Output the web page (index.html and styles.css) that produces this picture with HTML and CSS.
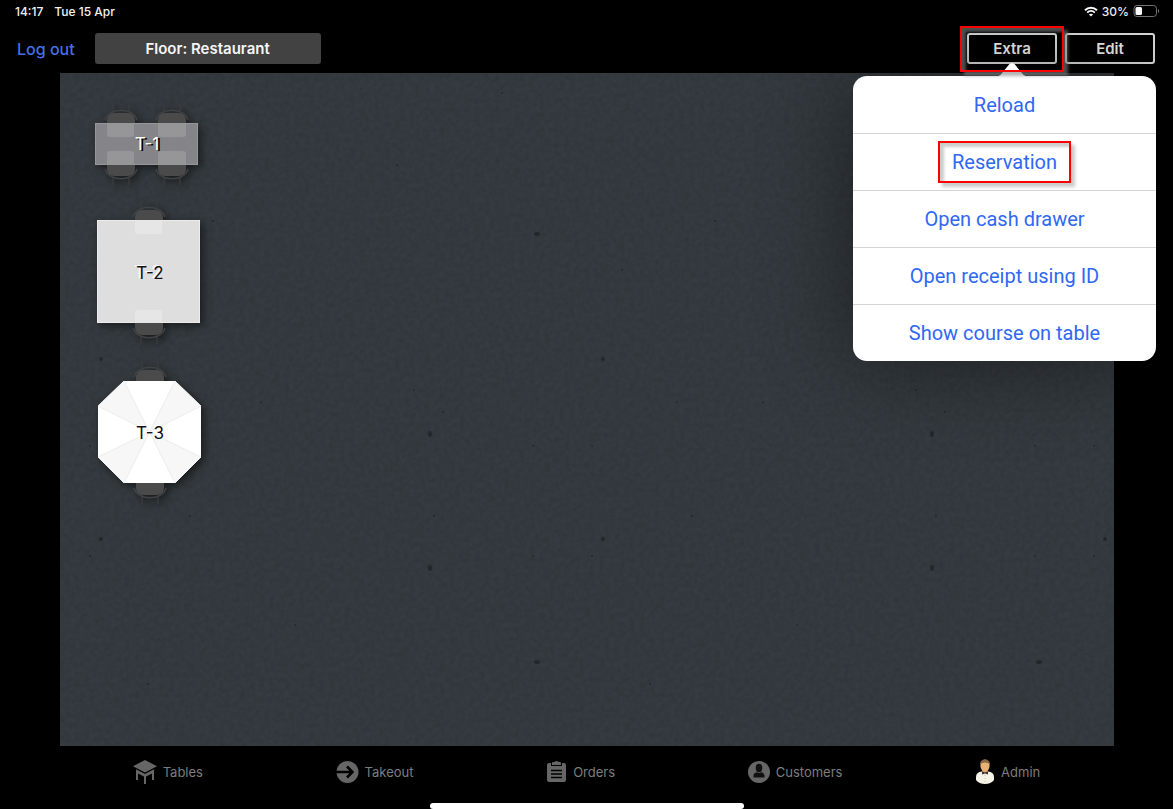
FILE: index.html
```html
<!DOCTYPE html>
<html lang="en">
<head>
    <meta charset="UTF-8">
    <meta name="viewport" content="width=device-width, initial-scale=1.0">
    <title>Floor: Restaurant</title>
    <link rel="stylesheet" href="styles.css">
</head>
<body>
    <div class="status-bar">
        <span>14:17</span>
        <span>Tue 15 Apr</span>
        <div class="status-right">
            <svg width="14" height="11" viewBox="0 0 14 11" fill="none" stroke="#fff" stroke-width="2">
                <path d="M1 4.2C4.4 .8 9.6 .8 13 4.2M3.2 6.6c2.2-2.1 5.4-2.1 7.6 0"/>
                <path d="M7 10.6L4.9 8.5c1.2-1.1 3-1.1 4.2 0z" fill="#fff" stroke="none"/>
            </svg>
            <span>30%</span>
            <svg width="27" height="12" viewBox="0 0 27 12">
                <rect x="1" y=".5" width="22.5" height="11" rx="3" fill="none" stroke="#777"/>
                <rect x="2.500" y="2" width="6.500" height="8" rx="1.500" fill="#fff"/>
                <path d="M25 4v4c1.600-.6 1.600-3.400 0-4z" fill="#777"/>
            </svg>
        </div>
    </div>

    <header class="toolbar">
        <a class="logout" href="#">Log out</a>
        <button class="floor-button">Floor: Restaurant</button>
        <div class="toolbar-right">
            <div class="extra">
                <button class="outline-button">Extra</button>
                <div class="popover">
                    <button>Reload</button>
                    <button><span class="marked">Reservation</span></button>
                    <button>Open cash drawer</button>
                    <button>Open receipt using ID</button>
                    <button>Show course on table</button>
                </div>
            </div>
            <button class="outline-button">Edit</button>
        </div>
    </header>

    <main class="floor">
        <svg class="concrete" width="100%" height="100%">
            <defs>
                <filter id="grain" x="0" y="0" width="100%" height="100%">
                    <feTurbulence type="fractalNoise" baseFrequency=".2" numOctaves="3" seed="4"/>
                    <feColorMatrix values="0 0 0 0 0  0 0 0 0 0  0 0 0 0 0  .16 0 0 0 -.04"/>
                </filter>
                <pattern id="specks" width="502" height="674" patternUnits="userSpaceOnUse">
                    <g fill="#22272b">
                        <ellipse cx="370" cy="361" rx="2" ry="3"/>
                        <ellipse cx="370" cy="495" rx="2" ry="3"/>
                        <ellipse cx="477" cy="161" rx="3" ry="2"/>
                        <ellipse cx="477" cy="589" rx="3" ry="2"/>
                        <ellipse cx="41" cy="286" rx="2" ry="2"/>
                        <ellipse cx="41" cy="466" rx="2" ry="2"/>
                        <circle cx="383" cy="339" r="1"/>
                        <circle cx="354" cy="317" r="1"/>
                        <circle cx="115" cy="329" r="1"/>
                        <circle cx="473" cy="373" r="1"/>
                        <circle cx="30" cy="373" r="1"/>
                        <circle cx="473" cy="483" r="1"/>
                        <circle cx="30" cy="483" r="1"/>
                        <circle cx="374" cy="443" r="1"/>
                        <circle cx="130" cy="443" r="1"/>
                        <circle cx="201" cy="329" r="1"/>
                        <circle cx="153" cy="148" r="1"/>
                        <circle cx="60" cy="197" r="1"/>
                        <circle cx="337" cy="92" r="1"/>
                        <circle cx="442" cy="20" r="1"/>
                        <circle cx="235" cy="552" r="1"/>
                        <circle cx="88" cy="611" r="1"/>
                    </g>
                </pattern>
            </defs>
            <rect width="100%" height="100%" filter="url(#grain)"/>
            <rect width="100%" height="100%" fill="url(#specks)"/>
        </svg>

        <svg width="0" height="0" class="symbols">
            <symbol id="chair" viewBox="0 0 34 36" overflow="visible">
                <path d="M9 0v8M25 0v8" stroke="#383b3d" stroke-width="1.500"/>
                <path d="M1 16C5 3 29 3 33 16" fill="none" stroke="#414243" stroke-width="1.500"/>
                <rect x="3" y="9" width="28" height="25" rx="7" fill="#4a4a4a"/>
            </symbol>
        </svg>

        <button class="table table-1">
            <svg width="140" height="110" viewBox="0 0 140 110">
                <use href="#chair" x="24" y="14" width="34" height="36"/>
                <use href="#chair" x="75" y="14" width="34" height="36"/>
                <use href="#chair" width="34" height="36" transform="translate(58 95) rotate(180)"/>
                <use href="#chair" width="34" height="36" transform="translate(109 95) rotate(180)"/>
                <rect x="15" y="33" width="103" height="42" fill="#858589"/>
                <rect x="15.500" y="33.500" width="102" height="41" fill="none" stroke="#97979a"/>
                <path d="M27 33h27v11q0 3-3 3H30q-3 0-3-3zM78 33h28v11q0 3-3 3H81q-3 0-3-3zM27 75h27V64q0-3-3-3H30q-3 0-3 3zM78 75h28V64q0-3-3-3H81q-3 0-3 3z" fill="#969698"/>
            </svg>
            <span>T-1</span>
        </button>
        <button class="table table-2">
            <svg width="140" height="160" viewBox="0 0 140 160">
                <use href="#chair" x="52" y="6" width="34" height="36"/>
                <use href="#chair" width="34" height="36" transform="translate(86 149) rotate(180)"/>
                <rect x="17" y="25" width="103" height="103" fill="#dedede"/>
                <rect x="17.500" y="25.500" width="102" height="102" fill="none" stroke="#ececec"/>
                <path d="M55 25h27v11q0 3-3 3H58q-3 0-3-3zM55 128h27v-10q0-3-3-3H58q-3 0-3 3z" fill="#e6e6e6"/>
            </svg>
            <span>T-2</span>
        </button>
        <button class="table table-3">
            <svg width="140" height="160" viewBox="0 0 140 160">
                <use href="#chair" x="53" y="6" width="34" height="36"/>
                <use href="#chair" width="34" height="36" transform="translate(87 149) rotate(180)"/>
                <path d="M44 26h51l26 25v51l-26 26H44l-26-26V51z" fill="#fff"/>
                <path d="M69.500 77L95 26l26 25zM69.500 77L121 102l-26 26zM69.500 77L44 128l-26-26zM69.500 77L18 51l26-25z" fill="#f7f7f7" stroke="#ededed"/>
            </svg>
            <span>T-3</span>
        </button>
    </main>

    <nav class="tab-bar">
        <a href="#">
            <svg width="24" height="24" viewBox="0 0 24 24" fill="#666">
                <path d="M12 0l12 6.200L12 12.500 0 6.200z"/>
                <path d="M3 9.200l9 4.800 9-4.800V20h-2v-6.500l-6 3V24h-2v-7.500l-6-3V20H3z"/>
            </svg>
            <span>Tables</span>
        </a>
        <a href="#">
            <svg width="23" height="24" viewBox="0 0 23 24">
                <circle cx="11.500" cy="12" r="11" fill="#666"/>
                <path d="M0 12h16M11 6.500l5.500 5.500-5.500 5.500" fill="none" stroke="#000" stroke-width="2.500"/>
            </svg>
            <span>Takeout</span>
        </a>
        <a href="#">
            <svg width="21" height="24" viewBox="0 0 21 24">
                <path d="M3 3h2v3h11V3h2q2 0 2 2v15q0 2-2 2H3q-2 0-2-2V5q0-2 2-2z" fill="#666"/>
                <path d="M6 5V3q0-1 1-1h1.500q2-2 4 0H14q1 0 1 1v2z" fill="#666"/>
                <path d="M5 10.500h11M5 14h11M5 17.500h11" stroke="#000" stroke-width="1.500"/>
            </svg>
            <span>Orders</span>
        </a>
        <a href="#">
            <svg width="22" height="24" viewBox="0 0 22 24">
                <circle cx="11" cy="12" r="11" fill="#666"/>
                <ellipse cx="11" cy="8" rx="3.300" ry="4.200" fill="#111"/>
                <path d="M5.500 17.500v-2q0-2.500 3.500-3.200 2 1.400 4 0 3.500.7 3.500 3.200v2z" fill="#111"/>
            </svg>
            <span>Customers</span>
        </a>
        <a href="#">
            <svg width="20" height="26" viewBox="0 0 20 26">
                <path d="M1 18q0-5 6-5.500h6q6 .5 6 5.500v3q-3 4-9 4t-9-4z" fill="#f6f1e6"/>
                <path d="M7 10h6v3l-3 1-3-1z" fill="#d99a50"/>
                <ellipse cx="10" cy="6.500" rx="4.600" ry="6" fill="#e8b272"/>
                <path d="M5 6q0-5.500 5-5.500T15 6q-1-2.500-5-2.500T5 6z" fill="#8a6a45"/>
                <path d="M7 12.500l3 1 3-1v3l-3-1-3 1z" fill="#333"/>
                <path d="M10 16v8" stroke="#c9c2b4" stroke-dasharray="1 2"/>
            </svg>
            <span>Admin</span>
        </a>
    </nav>
    <div class="home-indicator"></div>
</body>
</html>
```
FILE: styles.css
```css
body {
    margin: 0;
    min-height: 100vh;
    display: flex;
    flex-direction: column;
    background-color: #000;
    color: #f2f2f2;
    font-family: Inter, "Liberation Sans", sans-serif;
}
button {
    font-family: inherit;
    padding: 0;
    border: none;
    cursor: pointer;
}
a {
    text-decoration: none;
}
.status-bar {
    display: flex;
    align-items: center;
    gap: 11px;
    height: 22px;
    padding: 0 13px 2px 15px;
    font-size: 12px;
    font-weight: 500;
}
.status-right {
    display: flex;
    align-items: center;
    gap: 4px;
    margin-left: auto;
}
.toolbar {
    display: flex;
    align-items: center;
    height: 49px;
    padding: 0 18px 0 17px;
}
.logout {
    color: #4470e6;
    font-size: 16px;
    font-weight: 500;
}
.floor-button {
    width: 226px;
    height: 31px;
    margin-left: 20px;
    border-radius: 3px;
    background-color: #424242;
    color: #f5f5f5;
    font-size: 15px;
    font-weight: 600;
}
.toolbar-right {
    display: flex;
    gap: 8px;
    margin-left: auto;
}
.outline-button {
    display: block;
    width: 90px;
    height: 31px;
    border: 2px solid #dcdcdc;
    border-radius: 3px;
    background-color: #000;
    color: #f0f0f0;
    font-size: 15px;
    font-weight: 600;
}

/* Extra button and its menu */
.extra {
    position: relative;
    z-index: 2;
}
.extra::after {
    content: "";
    position: absolute;
    inset: -7px -7px -8px;
    border: 2px solid #f00;
    box-shadow: 4px 4px 3px rgba(128, 128, 128, 0.6), inset 4px 4px 3px rgba(128, 128, 128, 0.6);
    pointer-events: none;
}
.popover {
    position: absolute;
    top: 43px;
    right: -99px;
    width: 303px;
    border-radius: 14px;
    background-color: #fff;
    box-shadow: 0 0 90px rgba(0, 0, 0, 0.45);
}
.popover::before {
    content: "";
    position: absolute;
    top: -13px;
    right: 128px;
    width: 32px;
    height: 14px;
    background-color: #fff;
    clip-path: polygon(0 100%, 14% 86%, 42% 8%, 50% 0, 58% 8%, 86% 86%, 100% 100%);
}
.popover button {
    display: flex;
    align-items: center;
    justify-content: center;
    width: 100%;
    height: 57px;
    background: none;
    color: #2f68f3;
    font-family: Roboto, Inter, sans-serif;
    font-size: 20px;
}
.popover button + button {
    border-top: 1px solid #d4d4d4;
}
.marked {
    padding: 8px 12px;
    border: 2px solid #f00;
    line-height: 22px;
    box-shadow: 4px 4px 3px rgba(128, 128, 128, 0.4), inset 4px 4px 3px rgba(128, 128, 128, 0.4);
}

/* Floor plan */
.floor {
    position: relative;
    flex: 1;
    min-height: 480px;
    margin: 0 59px 0 60px;
    background-color: #353b40;
}
.concrete {
    position: absolute;
    inset: 0;
}
.symbols {
    position: absolute;
}
.table {
    position: absolute;
    left: 20px;
    width: 140px;
    background: none;
    font-size: 17px;
}
.table svg {
    display: block;
    filter: drop-shadow(3px 3px 4px rgba(0, 0, 0, 0.5));
}
.table span {
    position: absolute;
    inset: 0;
    display: flex;
    align-items: center;
    justify-content: center;
    padding-bottom: 5px;
    color: #111;
    text-shadow: -2px -1px 0 #fff;
}
.table-1 {
    top: 17px;
}
.table-1 span {
    padding: 0 6px 2px 0;
    color: #fff;
    text-shadow: 2px 1px 0 #000;
}
.table-2 {
    top: 122px;
}
.table-3 {
    top: 282px;
}

.tab-bar {
    display: flex;
    justify-content: space-evenly;
    height: 57px;
    box-sizing: border-box;
    padding-bottom: 5px;
}
.tab-bar a {
    display: flex;
    align-items: center;
    gap: 6px;
    color: #7d7d7d;
    font-size: 13px;
}
.home-indicator {
    align-self: center;
    width: 314px;
    max-width: 60%;
    height: 6px;
    border-radius: 3px;
    background-color: #fff;
}
```
